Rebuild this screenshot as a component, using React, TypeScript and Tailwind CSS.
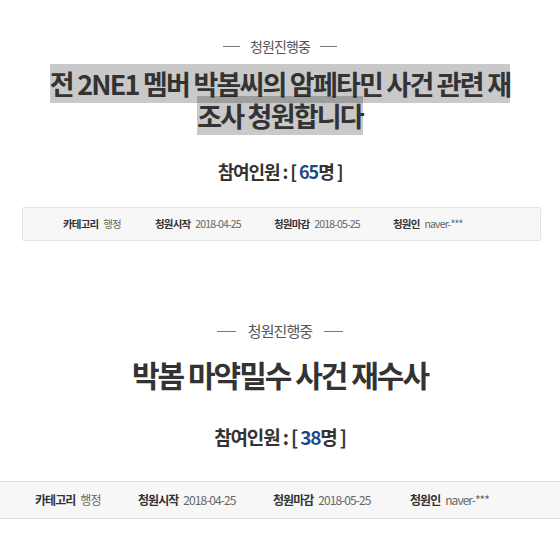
import React from "react";

const font = { fontFamily: '"Noto Sans CJK KR", "Noto Sans", sans-serif' };

function Sub({ big }: { big?: boolean }) {
  return (
    <div className={`flex items-center justify-center ${big ? "gap-[12px] text-[15px]" : "gap-[10px] text-[14px]"} leading-[20px] text-[#555] tracking-[-0.06em]`}>
      <span className={`${big ? "w-[19px]" : "w-[17px]"} h-px bg-[#777]`} />
      <span>청원진행중</span>
      <span className={`${big ? "w-[19px]" : "w-[17px]"} h-px bg-[#777]`} />
    </div>
  );
}

function Info({ big }: { big?: boolean }) {
  const items: [string, string][] = [
    ["카테고리", "행정"],
    ["청원시작", "2018-04-25"],
    ["청원마감", "2018-05-25"],
    ["청원인", "naver-***"],
  ];
  const widths = big
    ? ["w-[103px]", "w-[135px]", "w-[137px]", ""]
    : ["w-[92px]", "w-[119px]", "w-[119px]", ""];
  return (
    <div className={`flex items-center ${big ? "text-[12px]" : "text-[10.5px]"} tracking-[-0.08em]`}>
      {items.map(([k, v], i) => (
        <div key={k} className={`flex items-center gap-[5px] shrink-0 ${widths[i]}`}>
          <span className="font-bold text-[#333]">{k}</span>
          <span className="text-[#666]">{v}</span>
        </div>
      ))}
    </div>
  );
}

export default function App() {
  return (
    <div className="w-[560px] h-[560px] bg-white overflow-hidden" style={font}>
      <div className="pt-[36px] flex flex-col items-center">
        <Sub />
        <div className="mt-[12px] text-center text-[27px] leading-[32px] font-bold text-[#333] tracking-[-1.8px]">
          <span className="bg-[rgba(0,0,0,0.21)] [box-decoration-break:clone]">
            전 2NE1 멤버 박봄씨의 암페타민 사건 관련 재<br />조사 청원합니다
          </span>
        </div>
        <div className="mt-[26px] text-[18px] leading-[26px] font-bold text-[#333] tracking-[-0.06em]">
          참여인원 : [ <span className="text-[#1b4a8c]">65</span>명 ]
        </div>
      </div>
      <div className="mt-[23px] ml-[22px] mr-[19px] h-[34px] border border-[#e3e3e3] rounded-[2px] bg-[#f7f7f7] pl-[40px] flex items-center">
        <Info />
      </div>

      <div className="mt-[80px] flex flex-col items-center">
        <Sub big />
        <div className="mt-[14px] text-[30px] leading-[38px] font-bold text-[#333] tracking-[-2px]">
          박봄 마약밀수 사건 재수사
        </div>
        <div className="mt-[30px] text-[19px] leading-[28px] font-bold text-[#333] tracking-[-0.06em]">
          참여인원 : [ <span className="text-[#1b4a8c]">38</span>명 ]
        </div>
      </div>
      <div className="mt-[30px] h-[38px] border-y border-[#e0e0e0] bg-[#f7f7f7] pl-[35px] flex items-center">
        <Info big />
      </div>
    </div>
  );
}
